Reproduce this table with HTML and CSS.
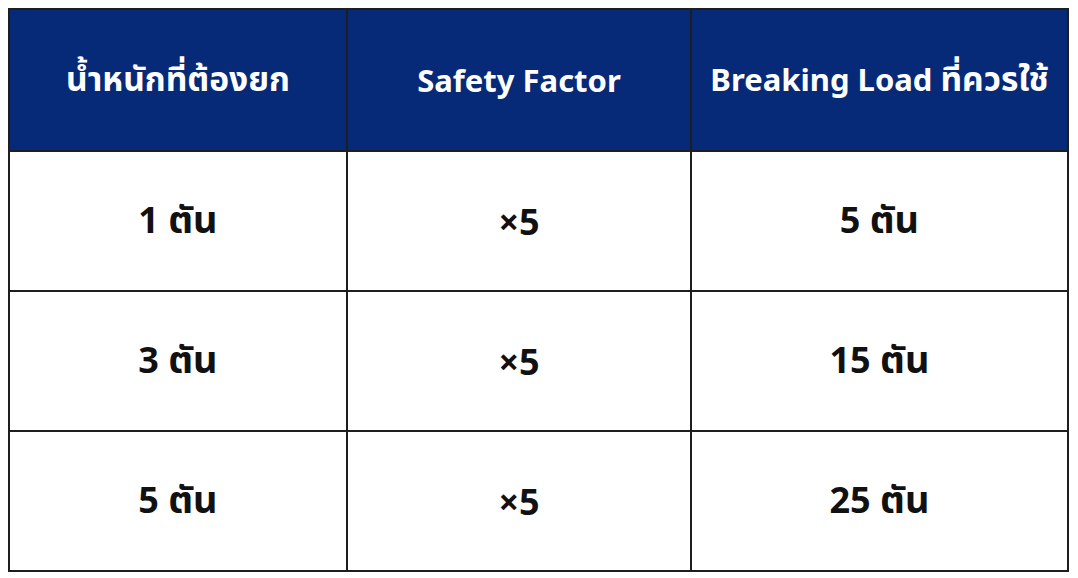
FILE: index.html
```html
<!DOCTYPE html>
<html lang="th">
<head>
<meta charset="utf-8">
<link rel="stylesheet" href="styles.css">
</head>
<body>
<table class="tbl">
  <thead>
    <tr>
      <th class="c1"><span class="th">น้ำหนักที่ต้องยก</span></th>
      <th class="c2">Safety Factor</th>
      <th class="c3">Breaking Load <span class="th">ที่ควรใช้</span></th>
    </tr>
  </thead>
  <tbody>
    <tr><td>1 <span class="th">ตัน</span></td><td>×5</td><td>5 <span class="th">ตัน</span></td></tr>
    <tr><td>3 <span class="th">ตัน</span></td><td>×5</td><td>15 <span class="th">ตัน</span></td></tr>
    <tr><td>5 <span class="th">ตัน</span></td><td>×5</td><td>25 <span class="th">ตัน</span></td></tr>
  </tbody>
</table>
</body>
</html>
```
FILE: styles.css
```css
html, body {
  margin: 0;
  background: #ffffff;
}
body {
  padding: 8px 0 0 8px;
  font-family: "Noto Sans", "Noto Sans Thai", "Open Sans", sans-serif;
}
.tbl {
  border-collapse: collapse;
  width: 1061px;
  border: 2px solid #1e1e1e;
}
.tbl th, .tbl td {
  border: 2px solid #1e1e1e;
  text-align: center;
  font-weight: 700;
  padding: 0;
}
.tbl th {
  background: #062a78;
  color: #ffffff;
  height: 140px;
  font-size: 31px;
}
.tbl th .th {
  font-size: 33.5px;
}
.tbl td {
  color: #111111;
  height: 138px;
  font-size: 36px;
}
.tbl td .th {
  font-size: 38px;
}
.c1 { width: 336px; }
.c2 { width: 342px; }
```
